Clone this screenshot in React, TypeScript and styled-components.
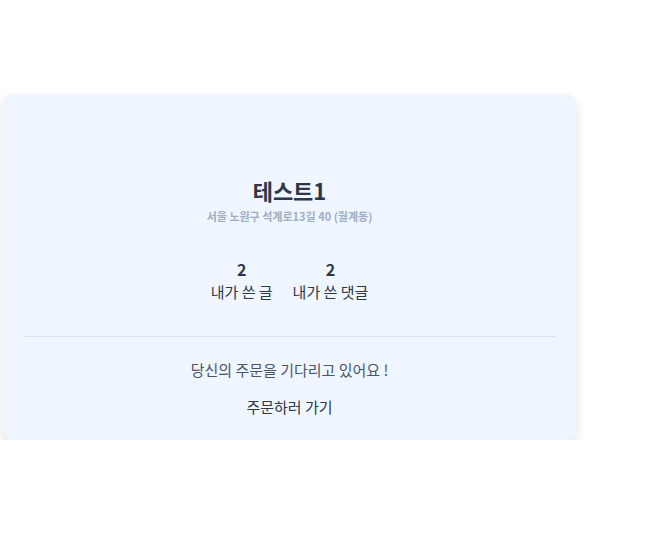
import React from "react";
import styled, { createGlobalStyle } from "styled-components";

const Global = createGlobalStyle`
  html, body { margin: 0; padding: 0; background: #ffffff; }
  body { font-family: "Noto Sans CJK KR", "Noto Sans", sans-serif; }
`;

const Page = styled.div`
  padding: 94px 0 0 3px;
`;

const Card = styled.div`
  width: 573px;
  box-sizing: border-box;
  background: #eff6ff;
  border-radius: 10px;
  box-shadow: 0 5px 12px rgba(0, 0, 0, 0.12);
  padding: 81px 20px 22px;
  display: flex;
  flex-direction: column;
  align-items: center;
`;

const Name = styled.h2`
  margin: 0;
  font-size: 22px;
  line-height: 30px;
  font-weight: 700;
  color: #2d3748;
`;

const Address = styled.p`
  margin: 3px 0 0;
  font-size: 11px;
  line-height: 16px;
  font-weight: 700;
  color: #a0aec0;
`;

const Stats = styled.div`
  display: flex;
  gap: 20px;
  margin-top: 34px;
`;

const Stat = styled.div`
  display: flex;
  flex-direction: column;
  align-items: center;
  gap: 1px;
`;

const Count = styled.span`
  font-size: 16px;
  line-height: 22px;
  font-weight: 700;
  color: #2d3748;
`;

const Label = styled.span`
  font-size: 15px;
  line-height: 22px;
  color: #2d3748;
`;

const Divider = styled.hr`
  align-self: stretch;
  border: 0;
  border-top: 1px solid #dbe3ee;
  margin: 33px 0 0;
`;

const Message = styled.p`
  margin: 22px 0 0;
  font-size: 15px;
  line-height: 22px;
  color: #4a5568;
`;

const OrderButton = styled.button`
  margin-top: 15px;
  background: none;
  border: 0;
  padding: 0;
  font-family: inherit;
  font-size: 15px;
  line-height: 22px;
  color: #2d3748;
  cursor: pointer;
`;

export default function App() {
  return (
    <>
      <Global />
      <Page>
        <Card>
          <Name>테스트1</Name>
          <Address>서울 노원구 석계로13길 40 (월계동)</Address>
          <Stats>
            <Stat>
              <Count>2</Count>
              <Label>내가 쓴 글</Label>
            </Stat>
            <Stat>
              <Count>2</Count>
              <Label>내가 쓴 댓글</Label>
            </Stat>
          </Stats>
          <Divider />
          <Message>당신의 주문을 기다리고 있어요 !</Message>
          <OrderButton>주문하러 가기</OrderButton>
        </Card>
      </Page>
    </>
  );
}
